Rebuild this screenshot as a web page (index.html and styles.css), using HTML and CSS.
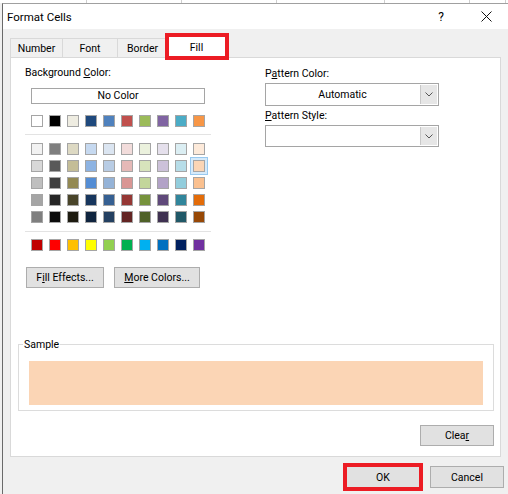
FILE: index.html
```html
<!DOCTYPE html>
<html lang="en">
<head>
    <meta charset="UTF-8">
    <title>Format Cells</title>
    <link rel="stylesheet" href="styles.css">
</head>
<body>
    <!-- spreadsheet column headers peeking out behind the dialog -->
    <div class="sheet">
        <div class="col" style="width: 87px">C</div>
        <div class="col" style="width: 95px">D</div>
        <div class="col" style="width: 95px">E</div>
        <div class="col" style="width: 108px">F</div>
        <div class="col" style="width: 85px">G</div>
        <div class="col" style="width: 36px">H</div>
    </div>

    <div class="dialog">
        <div class="titlebar">
            <span class="title">Format Cells</span>
            <span class="help">?</span>
            <svg class="close" width="11" height="11" viewBox="0 0 11 11">
                <path d="M0.5 0.5 L10.5 10.5 M10.5 0.5 L0.5 10.5" stroke="#111" stroke-width="1" fill="none"/>
            </svg>
        </div>

        <div class="main">
            <div class="tabs">
                <div class="tab tab-number">Number</div>
                <div class="tab tab-font">Font</div>
                <div class="tab tab-border">Border</div>
                <div class="tab tab-fill active">Fill</div>
            </div>

            <div class="panel">
                <div class="top">
                    <div class="bg-col">
                        <div class="label">Background <u>C</u>olor:</div>
                        <div class="no-color">No Color</div>

                        <div class="swatch-row first">
                            <span class="sw" style="background:#ffffff"></span>
                            <span class="sw" style="background:#000000"></span>
                            <span class="sw" style="background:#eeece1"></span>
                            <span class="sw" style="background:#1f497d"></span>
                            <span class="sw" style="background:#4f81bd"></span>
                            <span class="sw" style="background:#c0504d"></span>
                            <span class="sw" style="background:#9bbb59"></span>
                            <span class="sw" style="background:#8064a2"></span>
                            <span class="sw" style="background:#4bacc6"></span>
                            <span class="sw" style="background:#f79646"></span>
                        </div>

                        <div class="sep"></div>

                        <div class="theme-grid">
                            <span class="sw" style="background:#f2f2f2"></span>
                            <span class="sw" style="background:#7f7f7f"></span>
                            <span class="sw" style="background:#ddd9c3"></span>
                            <span class="sw" style="background:#c6d9f0"></span>
                            <span class="sw" style="background:#dbe5f1"></span>
                            <span class="sw" style="background:#f2dcdb"></span>
                            <span class="sw" style="background:#ebf1dd"></span>
                            <span class="sw" style="background:#e5e0ec"></span>
                            <span class="sw" style="background:#dbeef3"></span>
                            <span class="sw" style="background:#fdeada"></span>

                            <span class="sw" style="background:#d8d8d8"></span>
                            <span class="sw" style="background:#595959"></span>
                            <span class="sw" style="background:#c4bd97"></span>
                            <span class="sw" style="background:#8db3e2"></span>
                            <span class="sw" style="background:#b8cce4"></span>
                            <span class="sw" style="background:#e5b9b7"></span>
                            <span class="sw" style="background:#d7e3bc"></span>
                            <span class="sw" style="background:#ccc1d9"></span>
                            <span class="sw" style="background:#b7dde8"></span>
                            <span class="sw selected" style="background:#fbd5b5"></span>

                            <span class="sw" style="background:#bfbfbf"></span>
                            <span class="sw" style="background:#3f3f3f"></span>
                            <span class="sw" style="background:#938953"></span>
                            <span class="sw" style="background:#548dd4"></span>
                            <span class="sw" style="background:#95b3d7"></span>
                            <span class="sw" style="background:#d99694"></span>
                            <span class="sw" style="background:#c3d69b"></span>
                            <span class="sw" style="background:#b2a2c7"></span>
                            <span class="sw" style="background:#92cddc"></span>
                            <span class="sw" style="background:#fac08f"></span>

                            <span class="sw" style="background:#a5a5a5"></span>
                            <span class="sw" style="background:#262626"></span>
                            <span class="sw" style="background:#494429"></span>
                            <span class="sw" style="background:#17365d"></span>
                            <span class="sw" style="background:#366092"></span>
                            <span class="sw" style="background:#953734"></span>
                            <span class="sw" style="background:#76923c"></span>
                            <span class="sw" style="background:#5f497a"></span>
                            <span class="sw" style="background:#31859b"></span>
                            <span class="sw" style="background:#e36c09"></span>

                            <span class="sw" style="background:#7f7f7f"></span>
                            <span class="sw" style="background:#0c0c0c"></span>
                            <span class="sw" style="background:#1d1b10"></span>
                            <span class="sw" style="background:#0f243e"></span>
                            <span class="sw" style="background:#244061"></span>
                            <span class="sw" style="background:#632423"></span>
                            <span class="sw" style="background:#4f6128"></span>
                            <span class="sw" style="background:#3f3151"></span>
                            <span class="sw" style="background:#205867"></span>
                            <span class="sw" style="background:#974806"></span>
                        </div>

                        <div class="sep second"></div>

                        <div class="swatch-row standard">
                            <span class="sw" style="background:#c00000"></span>
                            <span class="sw" style="background:#ff0000"></span>
                            <span class="sw" style="background:#ffc000"></span>
                            <span class="sw" style="background:#ffff00"></span>
                            <span class="sw" style="background:#92d050"></span>
                            <span class="sw" style="background:#00b050"></span>
                            <span class="sw" style="background:#00b0f0"></span>
                            <span class="sw" style="background:#0070c0"></span>
                            <span class="sw" style="background:#002060"></span>
                            <span class="sw" style="background:#7030a0"></span>
                        </div>

                        <div class="color-buttons">
                            <div class="btn fill-effects">F<u>i</u>ll Effects...</div>
                            <div class="btn more-colors"><u>M</u>ore Colors...</div>
                        </div>
                    </div>

                    <div class="pattern-col">
                        <div class="label">P<u>a</u>ttern Color:</div>
                        <div class="combo">
                            <span class="combo-value">Automatic</span>
                            <span class="combo-arrow">
                                <svg width="8" height="5" viewBox="0 0 8 5"><path d="M0.5 0.5 L4 4 L7.5 0.5" stroke="#555" fill="none"/></svg>
                            </span>
                        </div>
                        <div class="label second"><u>P</u>attern Style:</div>
                        <div class="combo short">
                            <span class="combo-value"></span>
                            <span class="combo-arrow">
                                <svg width="8" height="5" viewBox="0 0 8 5"><path d="M0.5 0.5 L4 4 L7.5 0.5" stroke="#555" fill="none"/></svg>
                            </span>
                        </div>
                    </div>
                </div>

                <div class="sample">
                    <span class="legend">Sample</span>
                    <div class="sample-fill"></div>
                </div>

                <div class="clear-row">
                    <div class="btn clear">Clea<u>r</u></div>
                </div>
            </div>

            <div class="footer">
                <div class="btn ok">OK</div>
                <div class="btn cancel">Cancel</div>
            </div>
        </div>
    </div>
</body>
</html>
```

FILE: styles.css
```css
body {
    margin: 0;
    width: 508px;
    height: 494px;
    overflow: hidden;
    background: #f0f0f0;
    color: #000;
    font-family: Roboto, "Noto Sans", sans-serif;
    font-size: 10.5px;
}

u {
    text-decoration-thickness: 1px;
    text-underline-offset: 1px;
}

/* Sheet headers behind the dialog */
.sheet {
    height: 3px;
    display: flex;
    overflow: hidden;
    background: #fff;
}

.sheet .col {
    flex: none;
    box-sizing: border-box;
    border-right: 1px solid #cfcfcf;
    margin-top: -10px;
    height: 13px;
    text-align: center;
    font-size: 13px;
    line-height: 12px;
    color: #555;
}

/* Dialog frame */
.dialog {
    margin-left: 2px;
    border-left: 1px solid #6a6a6a;
    border-top: 1px solid #a0a0a0;
    background: #f0f0f0;
    height: 490px;
}

.titlebar {
    height: 25px;
    background: #fff;
    display: flex;
    align-items: center;
}

.title {
    flex: 1;
    padding-left: 4px;
    font-size: 11.5px;
}

.help {
    width: 10px;
    text-align: center;
    font-size: 12px;
    margin-right: 35px;
}

.close {
    margin-right: 16px;
}

.main {
    padding: 7px 0 0 7px;
}

/* Tabs */
.tabs {
    display: flex;
    align-items: flex-end;
    height: 21px;
}

.tab {
    height: 19px;
    box-sizing: border-box;
    border: 1px solid #d9d9d9;
    border-bottom: none;
    border-left: none;
    display: flex;
    align-items: center;
    justify-content: center;
}

.tab-number { width: 53px; border-left: 1px solid #d9d9d9; }
.tab-font { width: 55px; }
.tab-border { width: 50px; }

.tab.active {
    width: 58px;
    height: 21px;
    background: #fff;
    outline: 4px solid #ec1c24;
    outline-offset: -1px;
    position: relative;
    z-index: 1;
}

/* Tab page */
.panel {
    width: 491px;
    height: 400px;
    box-sizing: border-box;
    background: #fff;
    border: 1px solid #d9d9d9;
    padding: 7px 6px 0 7px;
}

.top {
    display: flex;
    padding-left: 7px;
}

.bg-col {
    width: 186px;
}

.label {
    height: 16px;
    line-height: 16px;
}

.no-color {
    margin: 7px 0 0 6px;
    width: 174px;
    height: 16px;
    box-sizing: border-box;
    border: 1px solid #a5a5a5;
    text-align: center;
    line-height: 14px;
}

.swatch-row {
    display: flex;
    gap: 6px;
    margin-left: 6px;
}

.swatch-row.first {
    margin-top: 11px;
}

.swatch-row.standard {
    margin-top: 7px;
}

.theme-grid {
    display: grid;
    grid-template-columns: repeat(10, 12px);
    column-gap: 6px;
    row-gap: 5px;
    margin: 8px 0 0 6px;
}

.sw {
    display: block;
    width: 12px;
    height: 12px;
    box-sizing: border-box;
    border: 1px solid #a5a5a5;
}

.sw.selected {
    box-shadow: 0 0 0 2px #d6eafa, 0 0 0 3px #99c9ef;
}

.sep {
    height: 1px;
    background: #e3e3e3;
    margin-top: 7px;
}

.sep.second {
    margin-top: 8px;
}

.color-buttons {
    display: flex;
    gap: 10px;
    margin: 16px 0 0 1px;
}

.btn {
    height: 21px;
    box-sizing: border-box;
    background: #e1e1e1;
    border: 1px solid #adadad;
    display: flex;
    align-items: center;
    justify-content: center;
}

.fill-effects { width: 78px; }
.more-colors { width: 86px; }

.pattern-col {
    margin-left: 54px;
    width: 174px;
    padding-top: 1px;
}

.combo {
    margin-top: 1px;
    height: 23px;
    box-sizing: border-box;
    border: 1px solid #a5a5a5;
    display: flex;
}

.combo.short {
    height: 22px;
}

.label.second {
    margin-top: 2px;
}

.combo-value {
    flex: 1;
    display: flex;
    align-items: center;
    justify-content: center;
}

.combo-arrow {
    width: 16px;
    margin: 1px;
    background: #e6e6e6;
    border-left: 1px solid #c8c8c8;
    display: flex;
    align-items: center;
    justify-content: center;
}

/* Sample group */
.sample {
    margin-top: 56px;
    height: 67px;
    box-sizing: border-box;
    border: 1px solid #dcdcdc;
}

.legend {
    display: block;
    width: fit-content;
    margin: -8px 0 0 4px;
    padding: 0 1px;
    line-height: 16px;
    background: #fff;
}

.sample-fill {
    margin: 8px 0 0 10px;
    width: 454px;
    height: 44px;
    background: #fbd5b5;
}

.clear-row {
    display: flex;
    justify-content: flex-end;
    margin-top: 14px;
}

.clear { width: 74px; }

/* OK / Cancel */
.footer {
    display: flex;
    justify-content: flex-end;
    gap: 10px;
    margin-top: 9px;
    padding-right: 4px;
}

.footer .btn {
    width: 74px;
    height: 22px;
}

.ok {
    outline: 4px solid #ec1c24;
    outline-offset: -1px;
}
```
